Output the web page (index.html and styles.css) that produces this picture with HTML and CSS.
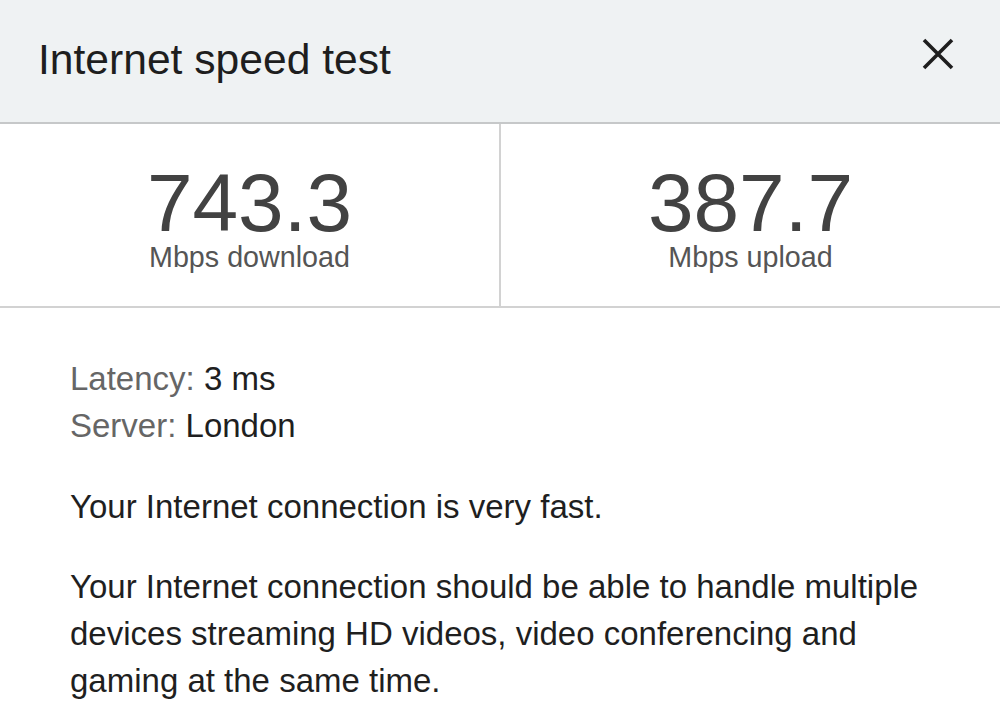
FILE: index.html
```html
<!DOCTYPE html>
<html lang="en">
<head>
<meta charset="utf-8">
<title>Internet speed test</title>
<link rel="stylesheet" href="styles.css">
</head>
<body>
<div class="dialog">
  <header class="header">
    <h1 class="title">Internet speed test</h1>
    <button class="close" aria-label="Close">
      <svg width="34" height="34" viewBox="0 0 34 34"><path d="M3 3 L31 31 M31 3 L3 31" stroke="#1e1e1e" stroke-width="3.6" stroke-linecap="butt" fill="none"/></svg>
    </button>
  </header>
  <section class="stats">
    <div class="stat">
      <div class="num">743.3</div>
      <div class="unit">Mbps download</div>
    </div>
    <div class="stat">
      <div class="num">387.7</div>
      <div class="unit">Mbps upload</div>
    </div>
  </section>
  <section class="body">
    <div class="info">
      <div class="row"><span class="lbl">Latency:</span> 3 ms</div>
      <div class="row"><span class="lbl">Server:</span> London</div>
    </div>
    <p class="para">Your Internet connection is very fast.</p>
    <p class="para">Your Internet connection should be able to handle multiple devices streaming HD videos, video conferencing and gaming at the same time.</p>
  </section>
</div>
</body>
</html>
```

FILE: styles.css
```css
html, body {
  margin: 0;
  padding: 0;
  background: #ffffff;
}
body {
  font-family: "Liberation Sans", Arial, Helvetica, sans-serif;
  color: #1f1f1f;
}
.dialog {
  width: 1000px;
}
.header {
  height: 122px;
  background: #eff2f3;
  border-bottom: 2px solid #c6c8c9;
  display: flex;
  align-items: center;
  justify-content: space-between;
  padding: 0 45px 0 38px;
}
.title {
  margin: 0;
  font-size: 42.6px;
  font-weight: normal;
  color: #1e1e1e;
  line-height: 48px;
  margin-top: -5px;
}
.close {
  border: 0;
  background: none;
  padding: 0;
  width: 34px;
  height: 34px;
  margin-top: -14px;
  display: flex;
}
.stats {
  display: flex;
  border-bottom: 2px solid #d2d2d2;
}
.stat {
  flex: 1;
  display: flex;
  flex-direction: column;
  align-items: center;
  padding: 41px 0 32px;
}
.stat + .stat {
  border-left: 2px solid #d2d2d2;
}
.num {
  font-size: 82px;
  line-height: 76px;
  color: #424242;
}
.unit {
  font-size: 28.7px;
  line-height: 33px;
  color: #555555;
}
.body {
  padding: 47px 70px 0 70px;
  font-size: 33px;
  line-height: 47px;
}
.info {
  margin-bottom: 34px;
}
.lbl {
  color: #666666;
}
.para {
  margin: 0 0 33px;
}
```
